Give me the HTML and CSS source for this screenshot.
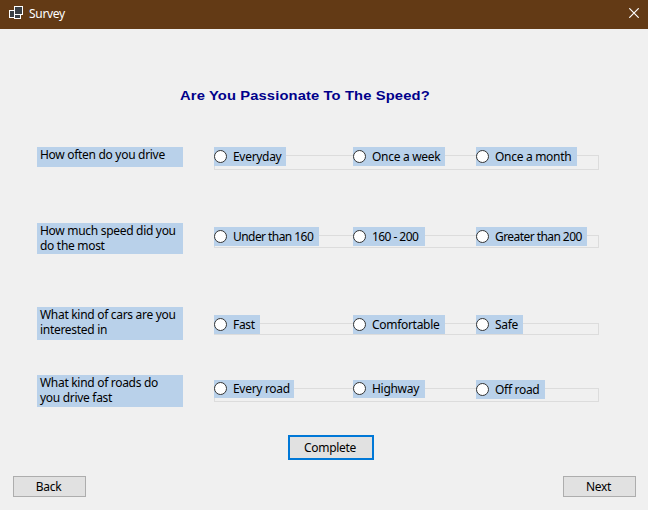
FILE: index.html
```html
<!DOCTYPE html>
<html lang="en">
<head>
<meta charset="utf-8">
<title>Survey</title>
<link rel="stylesheet" href="styles.css">
</head>
<body>
<header class="titlebar">
  <svg class="app-icon" width="14" height="13" viewBox="0 0 14 13"><g fill="#3a3f44" stroke="#fff"><rect x=".5" y="4.5" width="5" height="7"/><rect x="5.500" y="8.500" width="6" height="4"/><rect x="5.500" y=".5" width="8" height="8"/></g></svg>
  <span class="caption">Survey</span>
  <svg class="close" width="10" height="10" viewBox="0 0 10 10"><path d="M.3.3 9.700 9.700M9.700.3.3 9.700" stroke="#fff" stroke-width="1.200"/></svg>
</header>
<main class="form">
  <h1>Are You Passionate To The Speed?</h1>
  <section class="question q1">
    <div class="label">How often do you drive</div>
    <div class="group"><div class="frame"></div><div class="options">
      <label class="option w72"><i></i><span>Everyday</span></label>
      <label class="option w92"><i></i><span>Once a week</span></label>
      <label class="option w101"><i></i><span>Once a month</span></label>
    </div></div>
  </section>
  <section class="question q2">
    <div class="label">How much speed did you<br>do the most</div>
    <div class="group"><div class="frame"></div><div class="options">
      <label class="option w105"><i></i><span>Under than 160</span></label>
      <label class="option w72"><i></i><span>160 - 200</span></label>
      <label class="option w111"><i></i><span>Greater than 200</span></label>
    </div></div>
  </section>
  <section class="question q3">
    <div class="label">What kind of cars are you<br>interested in</div>
    <div class="group"><div class="frame"></div><div class="options">
      <label class="option w46"><i></i><span>Fast</span></label>
      <label class="option w92"><i></i><span>Comfortable</span></label>
      <label class="option w47"><i></i><span>Safe</span></label>
    </div></div>
  </section>
  <section class="question q4">
    <div class="label">What kind of roads do<br>you drive fast</div>
    <div class="group"><div class="frame"></div><div class="options">
      <label class="option short w80"><i></i><span>Every road</span></label>
      <label class="option short w72"><i></i><span>Highway</span></label>
      <label class="option low w69"><i></i><span>Off road</span></label>
    </div></div>
  </section>
  <button class="complete">Complete</button>
  <footer><button>Back</button><button>Next</button></footer>
</main>
</body>
</html>
```
FILE: styles.css
```css
* { box-sizing: border-box; }
body {
  margin: 0; width: 648px; height: 510px; overflow: hidden;
  display: flex; flex-direction: column;
  background: #f0f0f0; color: #000;
  font: 12px/15px "Noto Sans", "Open Sans", sans-serif;
  letter-spacing: -0.3px;
}
.titlebar {
  height: 29px; flex: none; display: flex; align-items: flex-start;
  padding: 6px 9px 0; background: #633a15; color: #fff;
}
.caption { margin: 0 auto 0 6px; }
.close { margin: 2px 0 0; }
.form { flex: 1; display: flex; flex-direction: column; }
h1 {
  margin: 58px 0 0 180px; width: 240px; height: 18px; white-space: nowrap;
  font: bold 13.4px/18px "Liberation Sans", Arial, sans-serif;
  letter-spacing: 0.12px; color: #00008b;
  transform: scaleX(1.1); transform-origin: 0 0;
}
.question { display: grid; grid-template-columns: 146px 385px; column-gap: 31px; margin-left: 37px; align-items: start; }
.q1 { margin-top: 42px; height: 76px; }
.q2 { height: 84px; }
.q3 { height: 68px; }
.q4 { height: 60px; }
.label { background: #b9d1ea; padding-left: 3px; white-space: nowrap; height: 20px; }
.q2 .label { height: 31px; }
.q3 .label { height: 33px; }
.q4 .label { height: 32px; }
.group { display: grid; }
.q2 .group { margin-top: 4px; }
.q3 .group { margin-top: 8px; }
.q4 .group { margin-top: 5px; }
.frame, .options { grid-area: 1 / 1; }
.frame { border: 1px solid #dcdcdc; margin-top: 8px; height: 15px; }
.q2 .frame { height: 13px; }
.q3 .frame { height: 12px; }
.q4 .frame { height: 14px; }
.options { display: grid; grid-template-columns: 139px 123px 123px; align-items: start; position: relative; }
.option { display: flex; height: 19px; background: #b9d1ea; white-space: nowrap; }
.option i { width: 13px; height: 13px; margin: 3px 6px 0 0; border: 1px solid #333; border-radius: 50%; background: #fff; }
.option span { margin-top: 2px; }
.q2 .option { letter-spacing: -0.56px; }
.option.short { height: 18px; }
.option.short i { margin-top: 2px; }
.option.short span { margin-top: 1px; }
.w46 { width: 46px; }
.w47 { width: 47px; }
.w69 { width: 69px; }
.w72 { width: 72px; }
.w80 { width: 80px; }
.w92 { width: 92px; }
.w101 { width: 101px; }
.w105 { width: 105px; }
.w111 { width: 111px; }
button {
  width: 73px; height: 21px; padding: 0 2px 0 0; border: 1px solid #adadad;
  background: #e1e1e1; color: #000; font: inherit; letter-spacing: inherit;
}
.complete { width: 86px; height: 25px; margin-left: 288px; border: 2px solid #0078d7; }
footer { display: flex; justify-content: space-between; margin: 16px 12px 0 13px; }
```
